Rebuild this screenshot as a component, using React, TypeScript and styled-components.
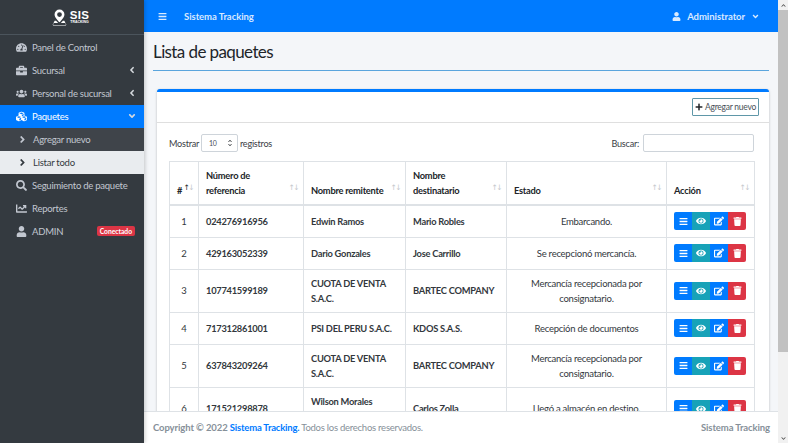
import React from "react";
import styled, { createGlobalStyle } from "styled-components";
import {
  FaTachometerAlt, FaBriefcase, FaUsers, FaCubes, FaAngleLeft, FaAngleDown, FaAngleRight,
  FaSearch, FaChartLine, FaUser, FaBars, FaEye, FaEdit, FaTrash, FaPlus, FaChevronUp, FaChevronDown,
} from "react-icons/fa";

const Global = createGlobalStyle`
  html, body { margin: 0; padding: 0; height: 443px; overflow: hidden; }
  body { font-family: Lato, "Noto Sans", sans-serif; font-size: 9.5px; letter-spacing: -.25px; color: #212529; }
  * { box-sizing: border-box; }
`;

const Page = styled.div`display: flex; width: 788px; height: 443px; overflow: hidden;`;

const Sidebar = styled.aside`
  width: 144px; flex: none; background: #343a40; display: flex; flex-direction: column;
  box-shadow: 1px 0 4px rgba(0,0,0,.2); z-index: 2;
`;
const Brand = styled.div`
  height: 35px; flex: none; display: flex; align-items: center; justify-content: center; gap: 3px;
  border-bottom: 1px solid #4b545c; color: #fff; padding-right: 3px;
`;
const BrandText = styled.div`display: flex; flex-direction: column; align-items: center; font-family: "Liberation Sans", sans-serif; font-weight: 700; letter-spacing: 0;`;
const BrandTitle = styled.span`font-size: 11.5px; line-height: 10px; letter-spacing: .3px;`;
const BrandSub = styled.span`font-size: 3.5px; line-height: 5px;`;
const Nav = styled.nav`display: flex; flex-direction: column; padding-top: 1px;`;
const NavRow = styled.div<{ $kind?: "active" | "sub" | "current" }>`
  height: 23px; display: flex; align-items: center; gap: 5px;
  padding: 0 7px 1px ${p => (p.$kind === "sub" || p.$kind === "current" ? 18 : 15)}px;
  color: ${p => (p.$kind === "active" ? "#fff" : p.$kind === "current" ? "#343a40" : "#c2c7d0")};
  background: ${p => (p.$kind === "active" ? "#007bff" : p.$kind === "current" ? "#e9ecef" : p.$kind === "sub" ? "#3f444a" : "transparent")};
  white-space: nowrap;
`;
const NavIcon = styled.span<{ $sub?: boolean }>`
  width: ${p => (p.$sub ? 9 : 12)}px; margin-right: ${p => (p.$sub ? 1 : 0)}px; display: flex; justify-content: center; font-size: 11px; flex: none;
`;
const NavLabel = styled.span`flex: 1;`;
const Badge = styled.span`
  background: #dc3545; color: #fff; font-size: 6.7px; font-weight: 700; border-radius: 2px; padding: 1px 3px; line-height: 8.5px; margin-right: 2px; letter-spacing: 0;
`;
const Caret = styled.span`display: flex; font-size: 10px; color: #d5d9de;`;

const Main = styled.div`flex: 1; min-width: 0; display: flex; flex-direction: column;`;
const Topbar = styled.header`
  height: 32px; flex: none; background: #007bff; display: flex; align-items: center; color: rgba(255,255,255,.85);
  padding: 0 18px 0 14px; font-weight: 700; letter-spacing: -.05px;
`;
const TopBrand = styled.span`margin-left: 17px; flex: 1;`;
const TopIcon = styled.span`display: flex; font-size: 9px;`;
const User = styled.span`display: flex; align-items: center; gap: 6px;`;
const Content = styled.main`flex: 1; min-height: 0; overflow: hidden; background: #f4f6f9; padding: 0 9px;`;
const Title = styled.h1`
  margin: 0; height: 39px; padding: 8px 0 0 0; font-size: 17px; line-height: 24px; letter-spacing: -.6px; font-weight: 400; color: #212529;
  border-bottom: 1px solid #5aa5dd;
`;
const Card = styled.section`
  margin: 18px 0 0 4px; background: #fff; border-top: 3px solid #007bff; border-radius: 3px;
  box-shadow: 0 0 1px rgba(0,0,0,.13), 0 1px 3px rgba(0,0,0,.2);
`;
const CardHead = styled.div`height: 31px; display: flex; justify-content: flex-end; align-items: center; padding: 0 10px; border-bottom: 1px solid rgba(0,0,0,.125);`;
const AddBtn = styled.button`
  width: 67px; height: 18px; padding: 0; font: inherit; font-size: 8.5px; letter-spacing: -.25px; color: #495057; background: #fff; border: 1px solid #5f97a8; border-radius: 1px;
  display: flex; align-items: center; justify-content: center; gap: 2px; white-space: nowrap;
`;
const PlusIcon = styled.span`display: flex; font-size: 8px; color: #212529;`;
const CardBody = styled.div`padding: 11px 15px 0 12px;`;
const Controls = styled.div`display: flex; justify-content: space-between; align-items: center; height: 18px; margin-bottom: 9px; color: #212529; font-size: 9.1px;`;
const Inline = styled.label`display: flex; align-items: center; gap: 2px; color: #3c4146;`;
const FakeSelect = styled.div`
  width: 37px; height: 18px; border: 1px solid #ced4da; border-radius: 2px; display: flex; align-items: center; justify-content: space-between;
  padding: 0 5px 0 7px; font-size: 7px; color: #495057; background: #fff;
`;
const SelectArrows = styled.span`display: flex; flex-direction: column; font-size: 4px; color: #212529;`;
const FakeInput = styled.div`width: 111px; height: 18px; border: 1px solid #ced4da; border-radius: 2px; background: #fff; margin-left: 2px;`;
const Table = styled.table`width: 585px; border-collapse: collapse; table-layout: fixed; color: #212529;`;
const Th = styled.th`
  border: 1px solid #dee2e6; border-bottom: 2px solid #dee2e6; padding: 6px 14px 6px 7px; text-align: left; vertical-align: bottom;
  line-height: 15px; font-weight: 700; position: relative; font-size: 9.3px;
`;
const SortMark = styled.span`
  position: absolute; right: 5px; bottom: 11px; font-family: "DejaVu Sans", sans-serif; font-size: 7.5px; line-height: 10px; font-weight: 400; letter-spacing: -1.5px; color: #c4c8cc;
`;
const SortUp = styled.span`color: #212529;`;
const Td = styled.td<{ $center?: boolean; $bold?: boolean }>`
  border: 1px solid #dee2e6; padding: 6px 7px; line-height: 15px; vertical-align: middle;
  text-align: ${p => (p.$center ? "center" : "left")}; font-weight: ${p => (p.$bold ? 700 : 400)};
  font-size: ${p => (p.$bold ? 9.3 : 9.5)}px; color: #33383d;
`;
const Row = styled.tr<{ $tall?: boolean }>`height: ${p => (p.$tall ? 42 : 32)}px;`;
const BtnGroup = styled.div`display: flex; width: 72px;`;
const ActBtn = styled.span<{ $c: string; $first?: boolean; $last?: boolean; $big?: boolean }>`
  width: 18px; height: 18px; background: ${p => p.$c}; color: #fff; display: flex; align-items: center; justify-content: center; font-size: ${p => (p.$big ? 10 : 9)}px;
  border-radius: ${p => (p.$first ? "2px 0 0 2px" : p.$last ? "0 2px 2px 0" : "0")};
`;
const Footer = styled.footer`
  height: 32px; flex: none; background: #fff; border-top: 1px solid #dee2e6; display: flex; justify-content: space-between; align-items: center;
  padding: 0 8px 0 9px; color: #869099; z-index: 1;
`;
const FootStrong = styled.strong`color: #869099; letter-spacing: -.1px;`;
const FootLink = styled.strong`color: #007bff; letter-spacing: -.2px;`;
const Scrollbar = styled.div`width: 10px; flex: none; background: #f1f1f1; display: flex; flex-direction: column; align-items: center;`;
const ScrollArrow = styled.span`height: 10px; flex: none; display: flex; align-items: center; font-size: 5px; color: #505050;`;
const ScrollThumb = styled.div`width: 100%; height: 342px; background: #c1c1c1; flex: none;`;
const Spacer = styled.div`flex: 1;`;

const rows = [
  { n: 1, ref: "024276916956", from: "Edwin Ramos", to: "Mario Robles", st: "Embarcando." },
  { n: 2, ref: "429163052339", from: "Dario Gonzales", to: "Jose Carrillo", st: "Se recepcionó mercancía." },
  { n: 3, ref: "107741599189", from: "CUOTA DE VENTA S.A.C.", to: "BARTEC COMPANY", st: "Mercancía recepcionada por consignatario.", tall: true },
  { n: 4, ref: "717312861001", from: "PSI DEL PERU S.A.C.", to: "KDOS S.A.S.", st: "Recepción de documentos" },
  { n: 5, ref: "637843209264", from: "CUOTA DE VENTA S.A.C.", to: "BARTEC COMPANY", st: "Mercancía recepcionada por consignatario.", tall: true },
  { n: 6, ref: "171521298878", from: "Wilson Morales Gutierrez", to: "Carlos Zolla", st: "Llegó a almacén en destino.", tall: true },
];

const widths = [29, 105, 102, 101, 160, 88];

const LogoMark = () => (
  <svg width="15" height="17" viewBox="0 0 17 18" fill="#fff" aria-hidden="true">
    <path fillRule="evenodd" d="M8.5 0a5.6 5.6 0 0 0-5.6 5.6c0 3.2 3.7 7 5.6 8.9 1.9-1.9 5.6-5.7 5.6-8.9A5.6 5.6 0 0 0 8.5 0zm0 3a2.7 2.7 0 1 1 0 5.4 2.7 2.7 0 0 1 0-5.4z" />
    <path d="M3 12.6h1.6l2.4 2.6H2L1 18h15l-1-2.8h-5l2.4-2.6H14l2.4 4.9H.6z" />
  </svg>
);

const sort = <SortMark>↑↓</SortMark>;

export default function App() {
  return (
    <Page>
      <Global />
      <Sidebar>
        <Brand>
          <LogoMark />
          <BrandText>
            <BrandTitle>SIS</BrandTitle>
            <BrandSub>TRACKING</BrandSub>
          </BrandText>
        </Brand>
        <Nav>
          <NavRow><NavIcon><FaTachometerAlt /></NavIcon><NavLabel>Panel de Control</NavLabel></NavRow>
          <NavRow><NavIcon><FaBriefcase /></NavIcon><NavLabel>Sucursal</NavLabel><Caret><FaAngleLeft /></Caret></NavRow>
          <NavRow><NavIcon><FaUsers /></NavIcon><NavLabel>Personal de sucursal</NavLabel><Caret><FaAngleLeft /></Caret></NavRow>
          <NavRow $kind="active"><NavIcon><FaCubes /></NavIcon><NavLabel>Paquetes</NavLabel><Caret><FaAngleDown /></Caret></NavRow>
          <NavRow $kind="sub"><NavIcon $sub><FaAngleRight /></NavIcon><NavLabel>Agregar nuevo</NavLabel></NavRow>
          <NavRow $kind="current"><NavIcon $sub><FaAngleRight /></NavIcon><NavLabel>Listar todo</NavLabel></NavRow>
          <NavRow><NavIcon><FaSearch /></NavIcon><NavLabel>Seguimiento de paquete</NavLabel></NavRow>
          <NavRow><NavIcon><FaChartLine /></NavIcon><NavLabel>Reportes</NavLabel></NavRow>
          <NavRow><NavIcon><FaUser /></NavIcon><NavLabel>ADMIN</NavLabel><Badge>Conectado</Badge></NavRow>
        </Nav>
      </Sidebar>
      <Main>
        <Topbar>
          <TopIcon><FaBars /></TopIcon>
          <TopBrand>Sistema Tracking</TopBrand>
          <User><TopIcon><FaUser /></TopIcon>Administrator<TopIcon><FaAngleDown /></TopIcon></User>
        </Topbar>
        <Content>
          <Title>Lista de paquetes</Title>
          <Card>
            <CardHead>
              <AddBtn><PlusIcon><FaPlus /></PlusIcon>Agregar nuevo</AddBtn>
            </CardHead>
            <CardBody>
              <Controls>
                <Inline>Mostrar <FakeSelect>10<SelectArrows><FaChevronUp /><FaChevronDown /></SelectArrows></FakeSelect> registros</Inline>
                <Inline>Buscar:<FakeInput /></Inline>
              </Controls>
              <Table>
                <colgroup>{widths.map((w, i) => <col key={i} style={{ width: w }} />)}</colgroup>
                <thead>
                  <tr>
                    <Th># <SortMark><SortUp>↑</SortUp>↓</SortMark></Th>
                    <Th>Número de referencia{sort}</Th>
                    <Th>Nombre remitente{sort}</Th>
                    <Th>Nombre destinatario{sort}</Th>
                    <Th>Estado{sort}</Th>
                    <Th>Acción{sort}</Th>
                  </tr>
                </thead>
                <tbody>
                  {rows.map(r => (
                    <Row key={r.n} $tall={r.tall}>
                      <Td $center>{r.n}</Td>
                      <Td $bold>{r.ref}</Td>
                      <Td $bold>{r.from}</Td>
                      <Td $bold>{r.to}</Td>
                      <Td $center>{r.st}</Td>
                      <Td>
                        <BtnGroup>
                          <ActBtn $c="#007bff" $first><FaBars /></ActBtn>
                          <ActBtn $c="#17a2b8" $big><FaEye /></ActBtn>
                          <ActBtn $c="#007bff" $big><FaEdit /></ActBtn>
                          <ActBtn $c="#dc3545" $last><FaTrash /></ActBtn>
                        </BtnGroup>
                      </Td>
                    </Row>
                  ))}
                </tbody>
              </Table>
            </CardBody>
          </Card>
        </Content>
        <Footer>
          <span><FootStrong>Copyright © 2022 </FootStrong><FootLink>Sistema Tracking.</FootLink> Todos los derechos reservados.</span>
          <FootStrong>Sistema Tracking</FootStrong>
        </Footer>
      </Main>
      <Scrollbar>
        <ScrollArrow><FaChevronUp /></ScrollArrow>
        <ScrollThumb />
        <Spacer />
        <ScrollArrow><FaChevronDown /></ScrollArrow>
      </Scrollbar>
    </Page>
  );
}
